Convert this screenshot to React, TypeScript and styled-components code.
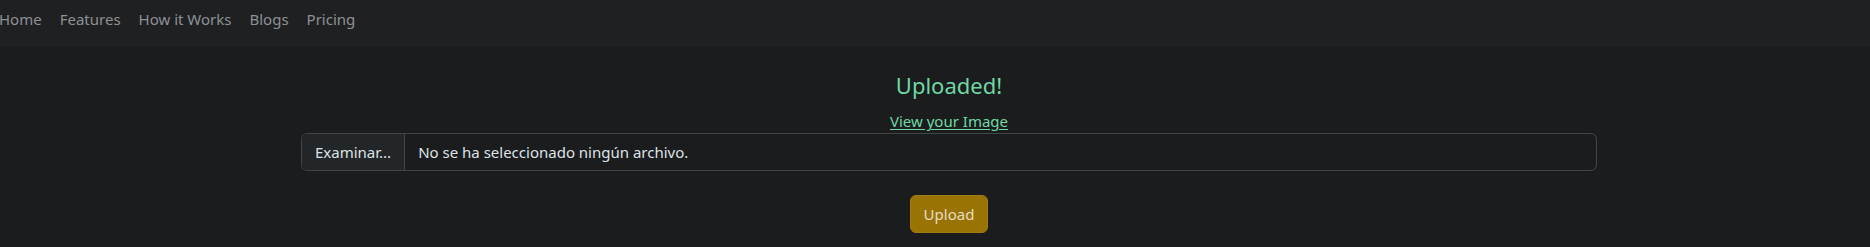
import React from "react";
import styled, { createGlobalStyle } from "styled-components";

const Global = createGlobalStyle`
  html, body { margin: 0; padding: 0; background: #1b1c1e; }
  body { font-family: "Noto Sans", "Open Sans", sans-serif; color: #dee2e6; overflow: hidden; }
  * { box-sizing: border-box; }
`;

const NavBar = styled.nav`
  height: 47px;
  background: #1f2022;
  display: flex;
  align-items: center;
`;

const NavList = styled.ul`
  list-style: none;
  margin: 0 0 0 -1px;
  padding: 0 0 10px 0;
  display: flex;
  gap: 18px;
`;

const NavLink = styled.a`
  color: #8d9196;
  font-size: 15px;
  text-decoration: none;
`;

const Container = styled.main`
  width: 1296px;
  margin-left: 301px;
  display: flex;
  flex-direction: column;
  align-items: center;
  padding-top: 25px;
`;

const Title = styled.h4`
  margin: 0;
  font-size: 22px;
  font-weight: 400;
  line-height: 1.2;
  color: #6fd8a3;
`;

const ViewLink = styled.a`
  margin-top: 12px;
  font-size: 15px;
  line-height: 22px;
  color: #6fd8a3;
  text-decoration: underline;
  text-underline-offset: 2px;
`;

const FileField = styled.div`
  margin-top: 1px;
  width: 100%;
  height: 38px;
  display: flex;
  border: 1px solid #424548;
  border-radius: 6px;
  overflow: hidden;
  font-size: 15px;
`;

const BrowseButton = styled.span`
  display: flex;
  align-items: center;
  padding: 0 13px;
  background: #232628;
  border-right: 1px solid #424548;
  color: #dee2e6;
`;

const FileName = styled.span`
  display: flex;
  align-items: center;
  padding: 0 13px;
  color: #dee2e6;
`;

const UploadButton = styled.button`
  margin-top: 24px;
  width: 78px;
  height: 38px;
  background: #997404;
  border: 1px solid #a07c12;
  border-radius: 6px;
  color: #e6dcc4;
  font-family: inherit;
  font-size: 15px;
  padding: 0;
`;

export default function App() {
  return (
    <>
      <Global />
      <NavBar>
        <NavList>
          {["Home", "Features", "How it Works", "Blogs", "Pricing"].map((l) => (
            <li key={l}>
              <NavLink href="#">{l}</NavLink>
            </li>
          ))}
        </NavList>
      </NavBar>
      <Container>
        <Title>Uploaded!</Title>
        <ViewLink href="#">View your Image</ViewLink>
        <FileField>
          <BrowseButton>Examinar...</BrowseButton>
          <FileName>No se ha seleccionado ningún archivo.</FileName>
        </FileField>
        <UploadButton>Upload</UploadButton>
      </Container>
    </>
  );
}
